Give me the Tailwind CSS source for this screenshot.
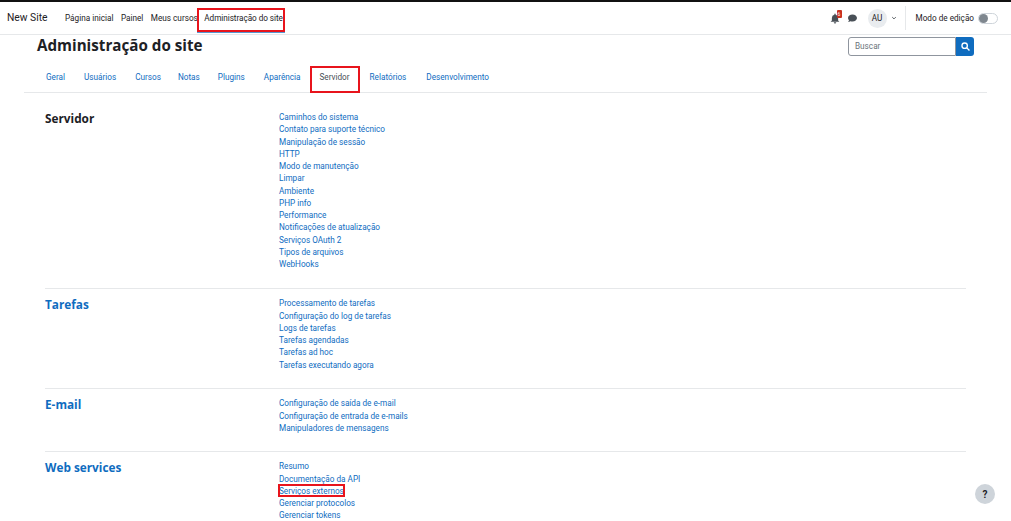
<!DOCTYPE html>
<html lang="pt-BR">
<head>
  <meta charset="UTF-8">
  <meta name="viewport" content="width=device-width, initial-scale=1.0">
  <title>Administração do site</title>
  <script src="https://cdn.jsdelivr.net/npm/@tailwindcss/browser@4"></script>
</head>
<body class="relative h-[521px] overflow-hidden bg-white font-['Roboto',sans-serif] text-[#1d2125]">
  <!-- navbar -->
  <header class="flex h-[35px] items-center border-t-2 border-b border-t-[#111] border-b-[#e6e8ea] pl-[7px] pr-[13px]">
    <span class="text-[10.3px] w-[58px]">New Site</span>
    <nav class="flex text-[8.2px] gap-[7.5px]">
      <a>Página inicial</a>
      <a>Painel</a>
      <a>Meus cursos</a>
      <a class="ml-[-1px] tracking-[-0.05px]">Administração do site</a>
    </nav>
    <div class="ml-auto flex items-center">
      <span class="relative mr-[4px] flex">
        <svg class="w-[10px] h-[11px]" viewBox="0 0 16 16" fill="#495057"><path d="M8 16a2 2 0 0 0 2-2H6a2 2 0 0 0 2 2zm5-5V7a5 5 0 0 0-4-4.9V1a1 1 0 0 0-2 0v1.100A5 5 0 0 0 3 7v4l-2 2h14z"/></svg>
        <span class="absolute left-[7px] top-[-3px] h-[8px] w-[5px] rounded-[1px] bg-[#ca3120] text-center text-[5px] leading-[8px] text-white">6</span>
      </span>
      <svg class="w-[9px] h-[9px] ml-[4px] mr-[11px]" viewBox="0 0 16 16" fill="#495057"><path d="M8 1C3.600 1 0 3.700 0 7.200c0 1.500.7 2.900 1.800 4-.3 1.200-1.100 2.300-1.800 3 1.600 0 3.100-.7 4.200-1.500 1.200.4 2.500.7 3.800.7 4.400 0 8-2.800 8-6.200S12.400 1 8 1z"/></svg>
      <span class="flex h-[19px] w-[19px] items-center justify-center rounded-full bg-[#e9ecef] text-[8.2px]">AU</span>
      <svg class="ml-[4px] w-[6px] h-[6px]" viewBox="0 0 10 10" fill="none" stroke="#495057" stroke-width="1.500"><path d="M2 3.500l3 3 3-3"/></svg>
      <span class="ml-[8px] mr-[10px] h-[24px] w-px bg-[#e6e8ea]"></span>
      <span class="text-[8.2px]">Modo de edição</span>
      <span class="ml-[4px] flex h-[11px] w-[20px] items-center rounded-full border border-[#ced4da] bg-white">
        <span class="h-[9px] w-[9px] rounded-full bg-[#7f878f]"></span>
      </span>
    </div>
  </header>

  <!-- page header -->
  <div class="flex h-[24px] items-center pl-[37px] pr-[37px] mt-[-1px]">
    <h1 class="font-['Open_Sans',sans-serif] text-[15.2px] font-bold leading-none">Administração do site</h1>
    <div class="ml-auto flex h-[19px] w-[126px]">
      <div class="flex flex-1 items-center rounded-l-[3px] border border-[#8f959e] pl-[6px] text-[8.2px] text-[#6a737b]">Buscar</div>
      <div class="flex w-[18px] items-center justify-center rounded-r-[3px] bg-[#0f6cbf]">
        <svg class="w-[9px] h-[9px]" viewBox="0 0 16 16" fill="none" stroke="#fff" stroke-width="2.400"><circle cx="6.500" cy="6.500" r="4.800"/><path d="M10 10l5 5"/></svg>
      </div>
    </div>
  </div>

  <!-- tabs -->
  <nav class="mx-[24px] mt-[5px] flex h-[30px] items-center border-b border-[#e6e8ea] pl-[22px] text-[8.2px] text-[#0f6cbf] gap-[19px]">
    <a>Geral</a>
    <a>Usuários</a>
    <a>Cursos</a>
    <a class="ml-[-2px]">Notas</a>
    <a class="ml-[-1px]">Plugins</a>
    <a>Aparência</a>
    <a class="text-[#495057]">Servidor</a>
    <a class="ml-[1px]">Relatórios</a>
    <a class="ml-[1px]">Desenvolvimento</a>
  </nav>

  <!-- sections -->
  <main class="mx-[45px] mt-[18px] w-[921px]">
    <section class="flex border-b border-[#e6e8ea] pb-[18px]">
      <h2 class="mt-[-1px] w-[234px] font-['Open_Sans',sans-serif] text-[11.8px] font-bold leading-[16px] text-[#1d2125]">Servidor</h2>
      <ul class="text-[8.2px] leading-[12.25px] text-[#0f6cbf]">
        <li>Caminhos do sistema</li>
        <li>Contato para suporte técnico</li>
        <li>Manipulação de sessão</li>
        <li>HTTP</li>
        <li>Modo de manutenção</li>
        <li>Limpar</li>
        <li>Ambiente</li>
        <li>PHP info</li>
        <li>Performance</li>
        <li>Notificações de atualização</li>
        <li>Serviços OAuth 2</li>
        <li>Tipos de arquivos</li>
        <li>WebHooks</li>
      </ul>
    </section>
    <section class="flex border-b border-[#e6e8ea] pt-[8px] pb-[17.5px]">
      <h2 class="mt-[-1px] w-[234px] font-['Open_Sans',sans-serif] text-[11.8px] font-bold leading-[16px] text-[#0f6cbf]">Tarefas</h2>
      <ul class="text-[8.2px] leading-[12.25px] text-[#0f6cbf]">
        <li>Processamento de tarefas</li>
        <li>Configuração do log de tarefas</li>
        <li>Logs de tarefas</li>
        <li>Tarefas agendadas</li>
        <li>Tarefas ad hoc</li>
        <li>Tarefas executando agora</li>
      </ul>
    </section>
    <section class="flex border-b border-[#e6e8ea] pt-[8px] pb-[17.25px]">
      <h2 class="mt-[-1px] w-[234px] font-['Open_Sans',sans-serif] text-[11.8px] font-bold leading-[16px] text-[#0f6cbf]">E-mail</h2>
      <ul class="text-[8.2px] leading-[12.25px] text-[#0f6cbf]">
        <li>Configuração de saída de e-mail</li>
        <li>Configuração de entrada de e-mails</li>
        <li>Manipuladores de mensagens</li>
      </ul>
    </section>
    <section class="flex pt-[8px]">
      <h2 class="mt-[-1px] w-[234px] font-['Open_Sans',sans-serif] text-[11.8px] font-bold leading-[16px] text-[#0f6cbf]">Web services</h2>
      <ul class="text-[8.2px] leading-[12.25px] text-[#0f6cbf]">
        <li>Resumo</li>
        <li>Documentação da API</li>
        <li>Serviços externos</li>
        <li>Gerenciar protocolos</li>
        <li>Gerenciar tokens</li>
      </ul>
    </section>
  </main>

  <!-- help button -->
  <div class="absolute left-[975px] top-[484px] flex h-[20px] w-[20px] items-center justify-center rounded-full bg-[#ced4da] text-[10px] font-bold">?</div>

  <!-- active nav underline + red annotation boxes -->
  <div class="absolute left-[197px] top-[32px] h-px w-[88px] bg-[#0f6cbf]/70"></div>
  <div class="absolute left-[197px] top-[8px] h-[24px] w-[88px] border-2 border-[#e8141c]"></div>
  <div class="absolute left-[310px] top-[66px] h-[27px] w-[50px] border-2 border-[#e8141c]"></div>
  <div class="absolute left-[278px] top-[484px] h-[13px] w-[67px] border-2 border-[#e8141c]"></div>
</body>
</html>
